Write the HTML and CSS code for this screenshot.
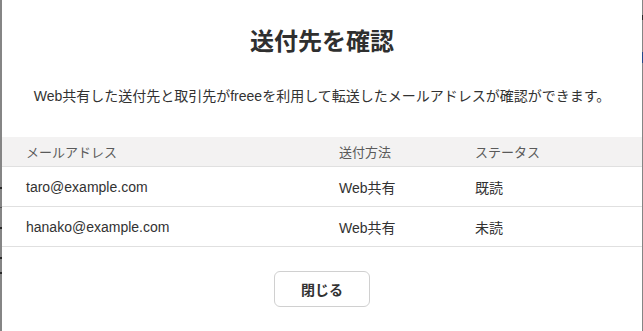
FILE: index.html
```html
<!DOCTYPE html>
<html lang="ja">
<head>
<meta charset="utf-8">
<link rel="stylesheet" href="styles.css">
</head>
<body>
<div class="backdrop">
  <div class="edge edge-left">
    <span class="mark m1"></span>
    <span class="mark m2"></span>
    <span class="mark m3"></span>
    <span class="mark m4"></span>
    <span class="mark m5"></span>
  </div>
  <div class="modal">
    <h1 class="title">送付先を確認</h1>
    <p class="desc">Web共有した送付先と取引先がfreeeを利用して転送したメールアドレスが確認ができます。</p>
    <table class="list">
      <thead>
        <tr><th class="c1">メールアドレス</th><th class="c2">送付方法</th><th class="c3">ステータス</th></tr>
      </thead>
      <tbody>
        <tr><td>taro@example.com</td><td>Web共有</td><td>既読</td></tr>
        <tr><td>hanako@example.com</td><td>Web共有</td><td>未読</td></tr>
      </tbody>
    </table>
    <div class="actions">
      <button class="btn">閉じる</button>
    </div>
  </div>
  <div class="edge edge-right">
    <span class="mark r1"></span>
    <span class="mark r2"></span>
  </div>
</div>
</body>
</html>
```
FILE: styles.css
```css
html, body {
  margin: 0;
  padding: 0;
  width: 643px;
  height: 331px;
  overflow: hidden;
}
body {
  font-family: "Liberation Sans", "Noto Sans CJK JP", sans-serif;
  color: #323232;
}
.backdrop {
  display: flex;
  width: 643px;
  height: 331px;
  background: #858585;
}
.edge {
  position: relative;
  flex: none;
  background: #858585;
}
.edge-left { width: 2px; }
.edge-right { width: 1px; }
.mark {
  position: absolute;
  left: 0;
  width: 2px;
  background: #2a2a2a;
}
.m1 { top: 187px; height: 2px; }
.m2 { top: 207px; height: 1px; background: #555; }
.m3 { top: 227px; height: 2px; }
.m4 { top: 257px; height: 2px; }
.m5 { top: 272px; height: 2px; }
.r1 { top: 15px; height: 5px; width: 1px; background: #2b2b2b; }
.r2 { top: 52px; height: 11px; width: 1px; background: #24488a; }
.modal {
  flex: none;
  width: 640px;
  height: 331px;
  background: #fff;
  display: flex;
  flex-direction: column;
}
.title {
  margin: 26px 0 0;
  font-size: 24px;
  line-height: 32px;
  font-weight: 700;
  text-align: center;
  color: #2f2f2f;
}
.desc {
  margin: 28px 0 0;
  font-size: 14px;
  line-height: 20px;
  text-align: center;
  color: #323232;
}
.list {
  margin-top: 31px;
  width: 100%;
  border-collapse: collapse;
  font-size: 14px;
}
.list th {
  background: #f3f2f2;
  font-weight: 400;
  font-size: 13px;
  color: #5a5a5a;
  text-align: left;
  height: 29px;
  padding: 0;
  border-bottom: 1px solid #e0e0e0;
}
.list td {
  height: 39px;
  padding: 0;
  border-bottom: 1px solid #e0e0e0;
  color: #323232;
}
.list th:first-child, .list td:first-child { padding-left: 24px; }
.c1 { width: 313px; }
.c2 { width: 136px; }
.actions {
  display: flex;
  justify-content: center;
  margin-top: 24px;
}
.btn {
  width: 96px;
  height: 36px;
  border: 1px solid #d0d0d0;
  border-radius: 6px;
  background: #fff;
  font-family: "Liberation Sans", "Noto Sans CJK JP", sans-serif;
  font-size: 14px;
  font-weight: 700;
  color: #323232;
  padding: 0;
}
```
